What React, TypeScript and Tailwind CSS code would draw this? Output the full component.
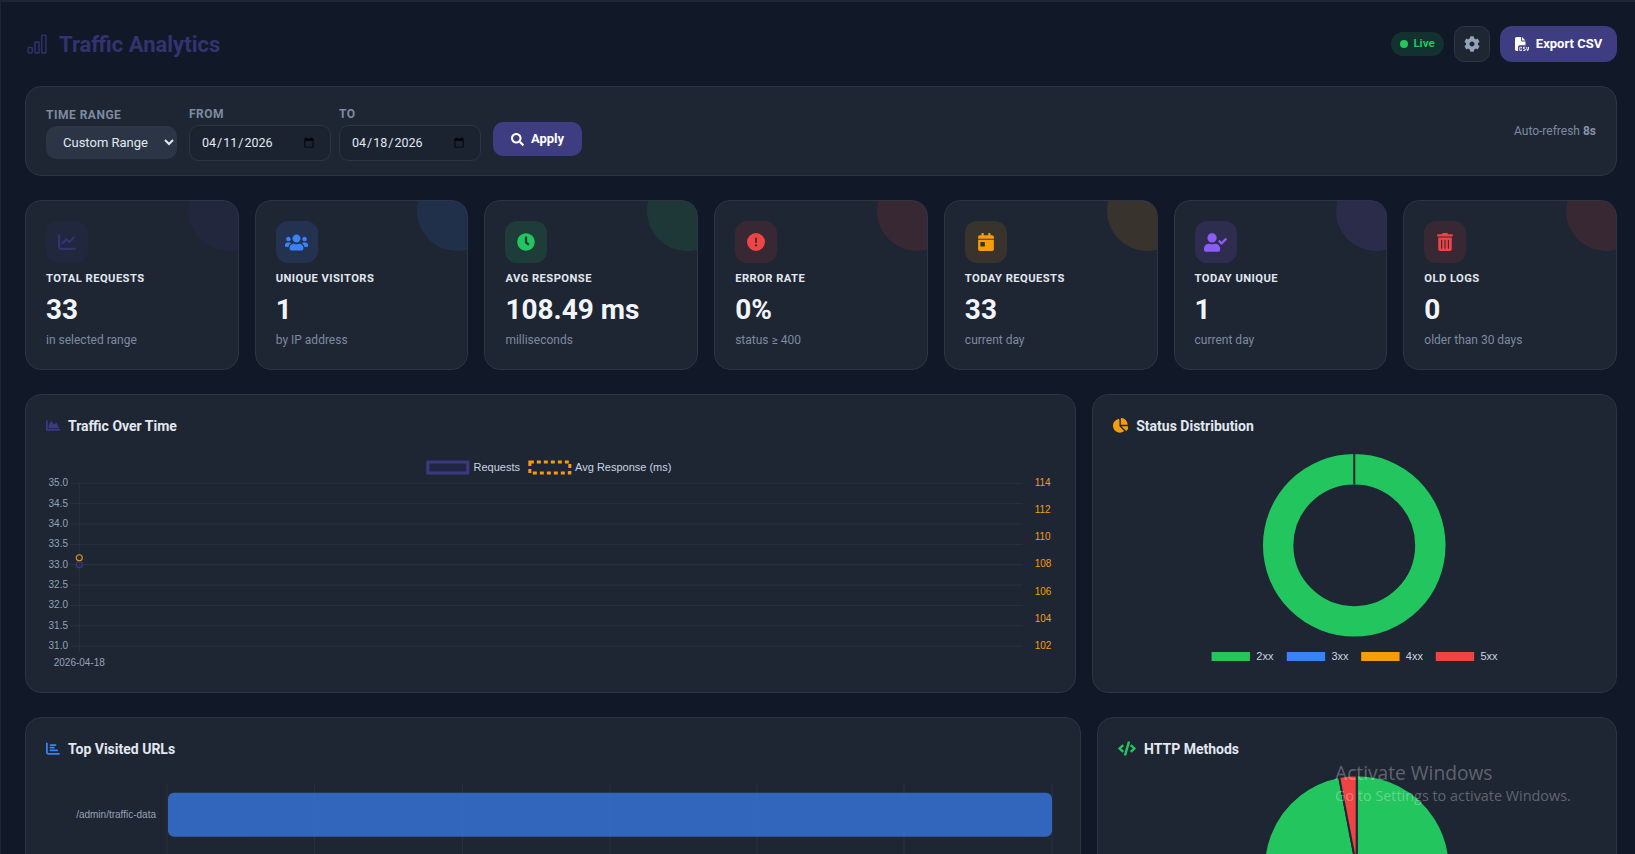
import {
  FaCalendarDay,
  FaChartArea,
  FaChartPie,
  FaClock,
  FaCode,
  FaCog,
  FaSearch,
  FaTrashAlt,
  FaUserCheck,
  FaUsers,
} from "react-icons/fa";
import { FaChartBar, FaChartLine, FaCircleExclamation, FaFileCsv } from "react-icons/fa6";
import { BsBarChart } from "react-icons/bs";
import type { ReactNode } from "react";

type Stat = {
  label: string;
  value: string;
  sub: string;
  icon: ReactNode;
  iconClass: string;
  boxClass: string;
  blobClass: string;
};

const stats: Stat[] = [
  {
    label: "TOTAL REQUESTS",
    value: "33",
    sub: "in selected range",
    icon: <FaChartLine />,
    iconClass: "text-[#33336f] text-[18px]",
    boxClass: "bg-[#33336f]/15",
    blobClass: "bg-[#33336f]/20",
  },
  {
    label: "UNIQUE VISITORS",
    value: "1",
    sub: "by IP address",
    icon: <FaUsers />,
    iconClass: "text-[#3b82f6] text-[23px]",
    boxClass: "bg-[#3b82f6]/15",
    blobClass: "bg-[#3b82f6]/12",
  },
  {
    label: "AVG RESPONSE",
    value: "108.49 ms",
    sub: "milliseconds",
    icon: <FaClock />,
    iconClass: "text-[#22c55e] text-[18px]",
    boxClass: "bg-[#22c55e]/15",
    blobClass: "bg-[#22c55e]/12",
  },
  {
    label: "ERROR RATE",
    value: "0%",
    sub: "status ≥ 400",
    icon: <FaCircleExclamation />,
    iconClass: "text-[#ef4444] text-[18px]",
    boxClass: "bg-[#ef4444]/12",
    blobClass: "bg-[#ef4444]/12",
  },
  {
    label: "TODAY REQUESTS",
    value: "33",
    sub: "current day",
    icon: <FaCalendarDay />,
    iconClass: "text-[#f59e0b] text-[18px]",
    boxClass: "bg-[#f59e0b]/12",
    blobClass: "bg-[#f59e0b]/12",
  },
  {
    label: "TODAY UNIQUE",
    value: "1",
    sub: "current day",
    icon: <FaUserCheck />,
    iconClass: "text-[#8b5cf6] text-[23px]",
    boxClass: "bg-[#8b5cf6]/15",
    blobClass: "bg-[#8b5cf6]/12",
  },
  {
    label: "OLD LOGS",
    value: "0",
    sub: "older than 30 days",
    icon: <FaTrashAlt />,
    iconClass: "text-[#ef4444] text-[18px]",
    boxClass: "bg-[#ef4444]/12",
    blobClass: "bg-[#ef4444]/12",
  },
];

const chartFont = "Liberation Sans, Arial, sans-serif";
const gridColor = "#2a313f";

const leftTicks = ["35.0", "34.5", "34.0", "33.5", "33.0", "32.5", "32.0", "31.5", "31.0"];
const rightTicks = ["114", "112", "110", "108", "106", "104", "102"];

function StatCard({ stat }: { stat: Stat }) {
  return (
    <div className="relative h-[170px] overflow-hidden rounded-2xl border border-[#2c3445] bg-[#1e2533] p-5">
      <div className={`absolute -top-[30px] -right-[30px] h-20 w-20 rounded-full ${stat.blobClass}`} />
      <div className={`flex h-[42px] w-[42px] items-center justify-center rounded-xl ${stat.boxClass} ${stat.iconClass}`}>
        {stat.icon}
      </div>
      <div className="mt-[9px] text-[11.2px] leading-[14px] font-bold tracking-[0.45px] text-[#e2e8f0]">{stat.label}</div>
      <div className="mt-[7px] text-[28px] leading-[34px] font-bold text-[#f1f5f9]">{stat.value}</div>
      <div className="mt-[5px] text-xs leading-4 text-[#7d8ba1]">{stat.sub}</div>
    </div>
  );
}

function CardTitle({ icon, iconClass, children }: { icon: ReactNode; iconClass: string; children: ReactNode }) {
  return (
    <div className="flex h-5 translate-y-[0.5px] items-center gap-2 text-[14px] font-bold text-[#e2e8f0]">
      <span className={iconClass}>{icon}</span>
      {children}
    </div>
  );
}

function TrafficChart() {
  return (
    <svg className="mt-4 block h-[221px] w-full" viewBox="0 0 1009 221" style={{ fontFamily: chartFont }}>
      {leftTicks.map((t, i) => {
        const y = 32.3 + i * 20.35;
        return (
          <g key={t}>
            <line x1={24} x2={977} y1={y} y2={y} stroke={gridColor} />
            <text x={22} y={y + 3} textAnchor="end" fontSize={10} fill="#94a3b8">
              {t}
            </text>
          </g>
        );
      })}
      {rightTicks.map((t, i) => (
        <text key={t} x={989} y={31.7 + i * 27.1 + 3.5} fontSize={10} fill="#f59e0b">
          {t}
        </text>
      ))}
      <line x1={33.3} x2={33.3} y1={32} y2={201} stroke={gridColor} />
      <text x={33.3} y={215} textAnchor="middle" fontSize={10} fill="#94a3b8">
        2026-04-18
      </text>
      <circle cx={33.3} cy={113.7} r={3} fill="none" stroke="#3b3a80" strokeWidth={1.2} />
      <circle cx={33.3} cy={106.7} r={3} fill="#2b2a2a" stroke="#d9962a" strokeWidth={1.1} />
      <rect x={382} y={11} width={40} height={11} fill="#312e81" fillOpacity={0.2} stroke="#3b3a80" strokeWidth={3} />
      <text x={427.7} y={20} fontSize={11} fill="#cbd5e1">
        Requests
      </text>
      <rect x={484} y={11} width={40} height={11} fill="none" stroke="#f59e0b" strokeWidth={3} strokeDasharray="4 3" />
      <text x={529.3} y={20} fontSize={11} fill="#cbd5e1">
        Avg Response (ms)
      </text>
    </svg>
  );
}

function StatusChart() {
  const legend = [
    { name: "2xx", color: "#22c55e", x: 98.4 },
    { name: "3xx", color: "#3b82f6", x: 173.6 },
    { name: "4xx", color: "#f59e0b", x: 248 },
    { name: "5xx", color: "#ef4444", x: 322.6 },
  ];
  return (
    <svg className="mt-4 block h-[221px] w-full" viewBox="0 0 483 221" style={{ fontFamily: chartFont }}>
      <circle cx={241.1} cy={94.3} r={76.1} fill="none" stroke="#22c55e" strokeWidth={30.4} />
      <line x1={241.1} x2={241.1} y1={3} y2={33.4} stroke="#1e2533" strokeWidth={2} />
      {legend.map((l) => (
        <g key={l.name}>
          <rect x={l.x} y={201} width={38.4} height={9} fill={l.color} />
          <text x={l.x + 44.7} y={208.7} fontSize={11} fill="#cbd5e1">
            {l.name}
          </text>
        </g>
      ))}
    </svg>
  );
}

function UrlsChart() {
  const lines = [121, 268.3, 416.3, 564, 711, 858, 1006];
  return (
    <svg className="mt-4 block h-[300px] w-full" viewBox="0 0 1014 300" style={{ fontFamily: chartFont }}>
      {lines.map((x) => (
        <line key={x} x1={x} x2={x} y1={9.3} y2={300} stroke={gridColor} />
      ))}
      <rect x={122} y={18.7} width={884} height={44} rx={6} fill="#3b82f6" fillOpacity={0.7} />
      <text x={110} y={44} textAnchor="end" fontSize={10} fill="#94a3b8">
        /admin/traffic-data
      </text>
    </svg>
  );
}

function MethodsChart() {
  return (
    <svg className="mt-4 block h-[300px] w-full" viewBox="0 0 478 300">
      <path d="M238.7 94 L238.7 1.2 A92.8 92.8 0 1 1 221.15 2.9 Z" fill="#22c55e" stroke="#1e2533" strokeWidth={2} />
      <path d="M238.7 94 L221.15 2.9 A92.8 92.8 0 0 1 238.7 1.2 Z" fill="#ef4444" stroke="#1e2533" strokeWidth={2} />
    </svg>
  );
}

export default function App() {
  return (
    <div className="relative h-screen overflow-hidden border-t-2 border-l border-[#1e2533] bg-[#111827] pt-6 pr-[18px] pl-6 font-['Roboto',sans-serif]">
      {/* header */}
      <div className="flex h-9 items-center justify-between">
        <div className="flex items-center gap-[11px] pl-px text-[22px] font-bold text-[#33336f]">
          <BsBarChart className="text-[22px]" />
          Traffic Analytics
        </div>
        <div className="flex items-center gap-[10px]">
          <div className="flex h-6 w-[53px] items-center justify-center gap-[5px] rounded-full bg-[#22c55e]/15 text-[11.5px] font-bold text-[#22c55e]">
            <span className="h-2 w-2 rounded-full bg-[#22c55e]" />
            Live
          </div>
          <button className="flex h-9 w-9 items-center justify-center rounded-[10px] border border-[#2c3445] bg-[#1e2533] text-[16px] text-[#94a3b8]">
            <FaCog />
          </button>
          <button className="flex h-9 w-[117px] items-center justify-center gap-[7px] rounded-xl bg-[#3f3d82] text-[13px] font-bold text-white">
            <FaFileCsv className="text-[14px]" />
            Export CSV
          </button>
        </div>
      </div>

      {/* filters */}
      <div className="mt-6 flex h-[90px] items-start justify-between rounded-2xl border border-[#2c3445] bg-[#1e2533] px-5 pt-[17px]">
        <div className="flex items-start gap-3">
          <div className="pt-[3px]">
            <div className="mb-[3px] text-xs leading-4 font-bold tracking-[0.5px] text-[#7d8ba1]">TIME RANGE</div>
            <select
              defaultValue="custom"
              className="h-[33px] w-[131px] rounded-[10px] bg-[#2b3545] pl-[13px] text-[13px] text-[#e2e8f0] outline-none"
            >
              <option value="custom">Custom Range</option>
            </select>
          </div>
          <div className="flex items-start gap-2">
            <div className="pt-[2px]">
              <div className="mb-[3px] text-xs leading-4 font-bold tracking-[0.5px] text-[#7d8ba1]">FROM</div>
              <input
                type="date"
                defaultValue="2026-04-11"
                className="h-9 w-[142px] rounded-[10px] border border-[#2c3445] bg-[#1b2230] pr-[13px] pl-[11px] text-[12.5px] text-[#e2e8f0] outline-none"
              />
            </div>
            <div className="pt-[2px]">
              <div className="mb-[3px] text-xs leading-4 font-bold tracking-[0.5px] text-[#7d8ba1]">TO</div>
              <input
                type="date"
                defaultValue="2026-04-18"
                className="h-9 w-[142px] rounded-[10px] border border-[#2c3445] bg-[#1b2230] pr-[13px] pl-[11px] text-[12.5px] text-[#e2e8f0] outline-none"
              />
            </div>
          </div>
          <button className="mt-[18px] flex h-[34px] w-[89px] items-center justify-center gap-[7px] rounded-[10px] bg-[#3f3d82] text-[13px] font-bold text-white">
            <FaSearch className="text-[13px]" />
            Apply
          </button>
        </div>
        <div className="mt-[19px] text-xs leading-4 text-[#7d8ba1]">
          Auto-refresh <span className="font-bold text-[#8794a8]">8s</span>
        </div>
      </div>

      {/* stats */}
      <div className="mt-6 grid grid-cols-7 gap-4">
        {stats.map((s) => (
          <StatCard key={s.label} stat={s} />
        ))}
      </div>

      {/* charts */}
      <div className="mt-6 grid grid-cols-[2fr_1fr] gap-4">
        <div className="rounded-2xl border border-[#2c3445] bg-[#1e2533] p-5">
          <CardTitle icon={<FaChartArea />} iconClass="text-[14px] text-[#3b3a80]">
            Traffic Over Time
          </CardTitle>
          <TrafficChart />
        </div>
        <div className="rounded-2xl border border-[#2c3445] bg-[#1e2533] p-5">
          <CardTitle icon={<FaChartPie />} iconClass="text-[15.6px] text-[#f59e0b]">
            Status Distribution
          </CardTitle>
          <StatusChart />
        </div>
      </div>

      <div className="mt-6 grid grid-cols-[1056px_1fr] gap-4">
        <div className="rounded-2xl border border-[#2c3445] bg-[#1e2533] p-5">
          <CardTitle icon={<FaChartBar />} iconClass="text-[14px] text-[#3b82f6]">
            Top Visited URLs
          </CardTitle>
          <UrlsChart />
        </div>
        <div className="rounded-2xl border border-[#2c3445] bg-[#1e2533] p-5">
          <CardTitle icon={<FaCode />} iconClass="text-[18px] text-[#22c55e]">
            HTTP Methods
          </CardTitle>
          <MethodsChart />
        </div>
      </div>

      {/* windows activation watermark */}
      <div className="pointer-events-none absolute top-[758px] left-[1334px] font-['Open_Sans',sans-serif] text-white/30">
        <div className="text-[19.2px] leading-[26px]">Activate Windows</div>
        <div className="text-[14.4px] leading-[20px]">Go to Settings to activate Windows.</div>
      </div>
    </div>
  );
}
